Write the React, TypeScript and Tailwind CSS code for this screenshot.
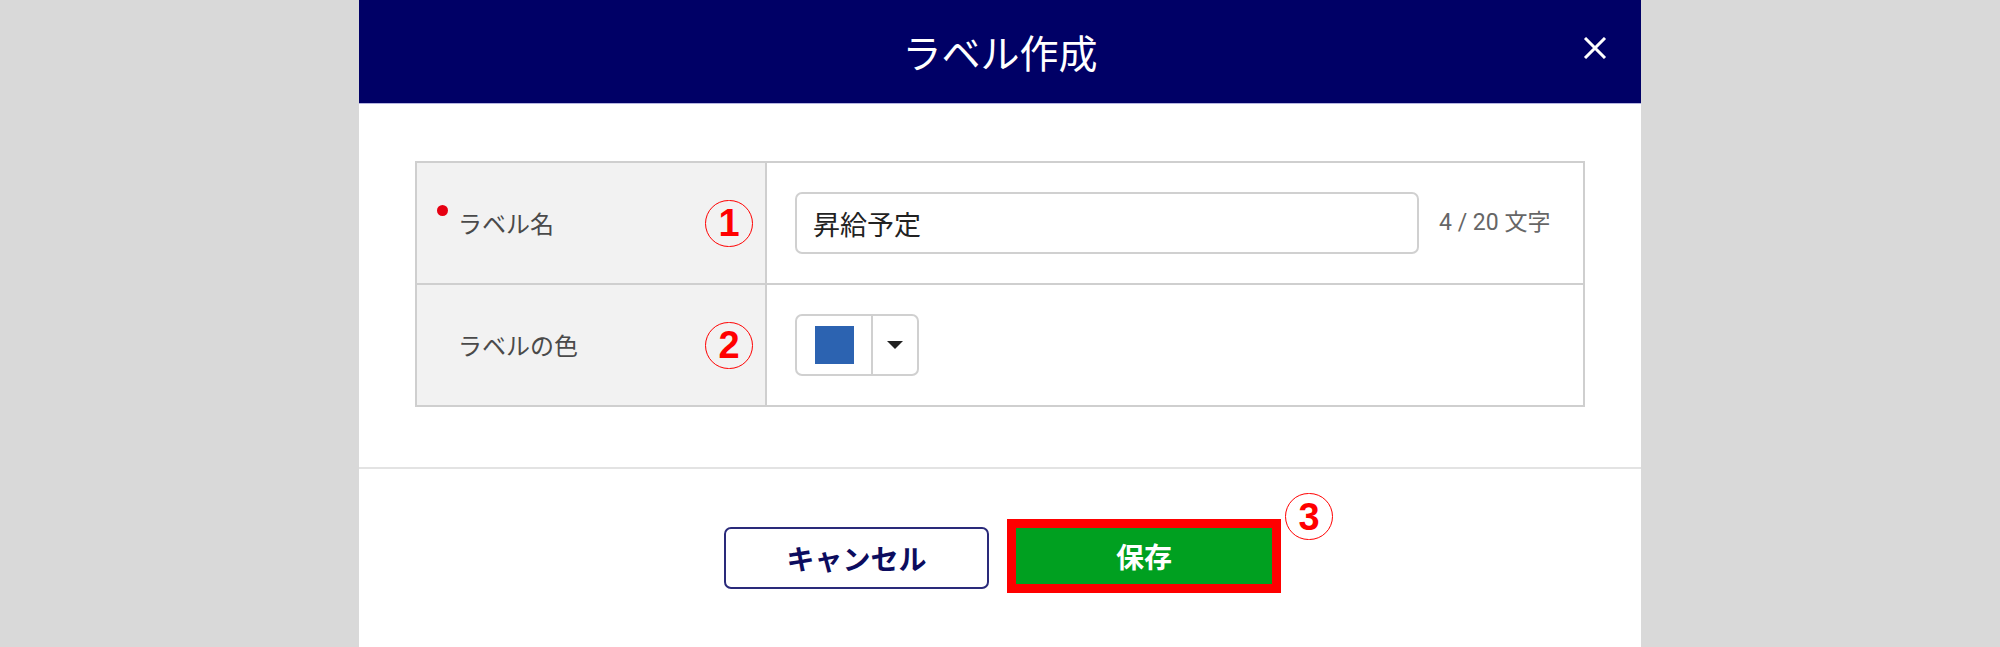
import React from "react";

function Circled({ n }: { n: string }) {
  return (
    <span className="flex h-[47px] w-[48px] items-center justify-center rounded-full border-[1.5px] border-[#ff0000] text-[38px] font-bold leading-none text-[#ff0000] [font-family:'Liberation_Sans',Arial,sans-serif]">
      {n}
    </span>
  );
}

export default function App() {
  return (
    <div className="flex h-[647px] w-full justify-center overflow-hidden bg-[#d9d9d9] [font-family:'Noto_Sans_CJK_JP','Noto_Sans',sans-serif]">
      <div className="flex h-full w-[1282px] flex-col bg-white">
        {/* Header */}
        <div className="relative flex h-[104px] shrink-0 items-center justify-center border-b border-[#b4b4e0] bg-[#000066]">
          <h1 className="text-[39px] font-normal leading-none text-white">ラベル作成</h1>
          <button className="absolute right-[34px] top-[37px] flex h-[22px] w-[24px] items-center justify-center">
            <svg width="24" height="22" viewBox="0 0 24 22" fill="none">
              <path d="M2 1 L22 21 M22 1 L2 21" stroke="white" strokeWidth="3" strokeLinecap="butt" />
            </svg>
          </button>
        </div>

        {/* Body */}
        <div className="px-[56px] pt-[57px] pb-[60px]">
          <div className="border-2 border-[#cfcfcf]">
            {/* Row 1 */}
            <div className="flex h-[120px]">
              <div className="relative flex w-[350px] shrink-0 items-center justify-between border-r-2 border-[#cfcfcf] bg-[#f2f2f2] pl-[41px] pr-[12px]">
                <span className="absolute left-[20px] top-[42px] h-[11px] w-[11px] rounded-full bg-[#e60012]" />
                <span className="text-[24px] leading-none text-[#4a4a4a]">ラベル名</span>
                <Circled n="1" />
              </div>
              <div className="flex flex-1 items-center pl-[28px]">
                <div className="flex h-[62px] w-[624px] items-center rounded-[7px] border-2 border-[#d0d0d0] px-[16px]">
                  <span className="text-[27px] leading-none text-[#222222]">昇給予定</span>
                </div>
                <span className="ml-[20px] text-[23px] text-[#666666] [font-family:'Roboto','Noto_Sans_CJK_JP',sans-serif]">
                  4 / 20 文字
                </span>
              </div>
            </div>
            {/* Row 2 */}
            <div className="flex h-[122px] border-t-2 border-[#cfcfcf]">
              <div className="flex w-[350px] shrink-0 items-center justify-between border-r-2 border-[#cfcfcf] bg-[#f2f2f2] pl-[41px] pr-[12px]">
                <span className="text-[24px] leading-none text-[#4a4a4a]">ラベルの色</span>
                <Circled n="2" />
              </div>
              <div className="flex flex-1 items-center pl-[28px]">
                <div className="flex h-[62px] w-[124px] items-stretch rounded-[7px] border-2 border-[#d0d0d0]">
                  <div className="flex w-[76px] items-center justify-center border-r-2 border-[#d0d0d0]">
                    <span className="h-[38px] w-[39px] bg-[#2c63b1]" />
                  </div>
                  <div className="flex flex-1 items-center justify-center">
                    <svg width="16" height="8" viewBox="0 0 16 8">
                      <path d="M0 0 H16 L8 8 Z" fill="#222222" />
                    </svg>
                  </div>
                </div>
              </div>
            </div>
          </div>
        </div>

        {/* Footer */}
        <div className="h-[2px] shrink-0 bg-[#e3e3e3]" />
        <div className="flex items-center justify-center gap-[18px] pl-[5px] pt-[50px]">
          <button className="mt-[4px] flex h-[62px] w-[265px] items-center justify-center rounded-[7px] border-2 border-[#2a2a7a] bg-white text-[28px] font-bold text-[#0c0c5e]">
            キャンセル
          </button>
          <div className="relative">
            <button className="flex h-[74px] w-[274px] items-center justify-center border-[9px] border-[#ff0000] bg-[#00a020] text-[28px] font-bold text-white">
              保存
            </button>
            <div className="absolute left-[278px] top-[-26px]">
              <Circled n="3" />
            </div>
          </div>
        </div>
      </div>
    </div>
  );
}
